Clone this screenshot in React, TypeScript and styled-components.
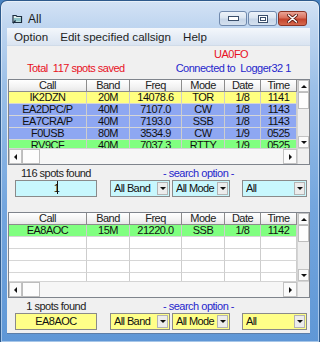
import React from 'react';
import styled, { createGlobalStyle } from 'styled-components';

const GRID_FONT = `"Liberation Sans", Arial, sans-serif`;
const UI_FONT = `"Liberation Sans", Arial, sans-serif`;

const GlobalStyle = createGlobalStyle`
  html, body { margin: 0; padding: 0; background: #4a84c2; }
  body { width: 320px; height: 342px; overflow: hidden; }
  * { box-sizing: border-box; }
`;

const COLS = [78, 43, 52, 43, 36, 36];
const HEAD = ['Call', 'Band', 'Freq', 'Mode', 'Date', 'Time'];

const ROW_COLORS: Record<string, string> = {
  yellow: '#ffff80',
  blue: '#8ea7f2',
  green: '#80ff80',
  white: '#ffffff',
};

type Spot = { cells: string[]; color: string };

const allSpots: Spot[] = [
  { cells: ['IK2DZN', '20M', '14078.6', 'TOR', '1/8', '1141'], color: 'yellow' },
  { cells: ['EA2DPC/P', '40M', '7107.0', 'CW', '1/8', '1143'], color: 'blue' },
  { cells: ['EA7CRA/P', '40M', '7193.0', 'SSB', '1/8', '1143'], color: 'blue' },
  { cells: ['F0USB', '80M', '3534.9', 'CW', '1/9', '0525'], color: 'blue' },
  { cells: ['RV9CF', '40M', '7037.3', 'RTTY', '1/9', '0525'], color: 'green' },
];

const foundSpots: Spot[] = [
  { cells: ['EA8AOC', '15M', '21220.0', 'SSB', '1/8', '1142'], color: 'green' },
  { cells: ['', '', '', '', '', ''], color: 'white' },
  { cells: ['', '', '', '', '', ''], color: 'white' },
  { cells: ['', '', '', '', '', ''], color: 'white' },
  { cells: ['', '', '', '', '', ''], color: 'white' },
];

const Window = styled.div`
  width: 320px;
  height: 342px;
  display: flex;
  flex-direction: column;
  border: 1px solid #2e5a8c;
  border-bottom: none;
  border-radius: 7px 7px 0 0;
  background: linear-gradient(180deg, #d4e3f5 0%, #c0d6f0 7%, #9cc0e8 25%, #74a6de 60%, #5f97d6 100%);
  box-shadow: inset 0 0 0 1px rgba(255, 255, 255, 0.45);
`;

const TitleBar = styled.div`
  height: 27px;
  flex: none;
  display: flex;
  align-items: center;
  padding: 8px 0 0 11px;
`;

const TitleText = styled.span`
  margin-left: 5px;
  font-family: ${UI_FONT};
  font-size: 12px;
  color: #1b1b1b;
`;

const CaptionButtons = styled.div`
  display: flex;
  gap: 1px;
  margin-left: auto;
  margin-right: 12px;
`;

const CaptionButton = styled.div<{ $close?: boolean; $w: number }>`
  width: ${(p) => p.$w}px;
  height: 15px;
  border: 1px solid ${(p) => (p.$close ? '#8b3325' : '#7089ad')};
  border-radius: 3px;
  display: flex;
  align-items: center;
  justify-content: center;
  background: ${(p) =>
    p.$close
      ? 'linear-gradient(180deg, #eaa597 0%, #d9705d 45%, #c4432c 55%, #d66a4f 100%)'
      : 'linear-gradient(180deg, #eef3f9 0%, #dbe5f1 45%, #c6d5e8 55%, #d5e1ef 100%)'};
`;

const Client = styled.div`
  flex: 1;
  margin: 0 9px 8px 6px;
  display: flex;
  flex-direction: column;
  border-bottom: 1px solid #5c7ea8;
`;

const MenuBar = styled.div`
  height: 18px;
  flex: none;
  display: flex;
  align-items: center;
  padding-left: 1px;
  background: linear-gradient(180deg, #f4f7fb 0%, #e6edf6 50%, #dae4f1 100%);
  border-bottom: 1px solid #d0dbe8;
`;

const MenuItem = styled.span`
  padding: 0 6px;
  font-family: ${UI_FONT};
  font-size: 11.6px;
  color: #1e1e1e;
  white-space: nowrap;
`;

const Content = styled.div`
  flex: 1;
  background: #f0f0f0;
  padding-top: 2px;
  font-family: ${GRID_FONT};
  font-size: 11px;
  letter-spacing: -0.5px;
  white-space: nowrap;
`;

const CallLine = styled.div`
  height: 12px;
  line-height: 12px;
  padding-left: 207px;
  color: #e8101e;
`;

const StatusLine = styled.div`
  height: 12px;
  line-height: 12px;
  margin-top: 2px;
  display: flex;
  white-space: pre;
`;

const StatusText = styled.span<{ $color: string; $left: number }>`
  color: ${(p) => p.$color};
  margin-left: ${(p) => p.$left}px;
`;

const GridFrame = styled.div<{ $top: number }>`
  margin: ${(p) => p.$top}px 0 0 1px;
  width: 302px;
  height: 86px;
  border: 1px solid #7f848c;
  background: #fff;
  display: grid;
  grid-template-columns: 288px 12px;
  grid-template-rows: 68px 16px;
`;

const TableArea = styled.div`
  overflow: hidden;
`;

const Row = styled.div`
  display: flex;
  height: 12px;
`;

const HeadCell = styled.div<{ $w: number }>`
  width: ${(p) => p.$w}px;
  flex: none;
  height: 12px;
  line-height: 11px;
  text-align: center;
  color: #222;
  background: linear-gradient(180deg, #ffffff 0%, #f3f3f3 60%, #e8e8e8 100%);
  border-right: 1px solid #8c8c8c;
  border-bottom: 1px solid #8c8c8c;
`;

const Cell = styled.div<{ $w: number; $bg: string }>`
  width: ${(p) => p.$w}px;
  flex: none;
  height: 12px;
  line-height: 11px;
  text-align: center;
  color: #111;
  background: ${(p) => p.$bg};
  border-right: 1px solid #cdcdcd;
  border-bottom: 1px solid #d6d6d6;
`;

const VScroll = styled.div`
  display: flex;
  flex-direction: column;
  background: #eeeeee;
  border-left: 1px solid #d4d4d4;
`;

const HScroll = styled.div`
  display: flex;
  background: #f6f6f6;
  border-top: 1px solid #d4d4d4;
`;

const ScrollBtn = styled.div<{ $w?: number; $h?: number }>`
  width: ${(p) => (p.$w ? `${p.$w}px` : '100%')};
  height: ${(p) => (p.$h ? `${p.$h}px` : '100%')};
  flex: none;
  display: flex;
  align-items: center;
  justify-content: center;
  background: #fbfbfb;
  border: 1px solid #c2c2c2;
`;

const Thumb = styled.div<{ $w?: number; $h?: number }>`
  width: ${(p) => (p.$w ? `${p.$w}px` : '100%')};
  height: ${(p) => (p.$h ? `${p.$h}px` : '100%')};
  flex: none;
  background: #fdfdfd;
  border: 1px solid #bdbdbd;
`;

const Track = styled.div`
  flex: 1;
`;

const Corner = styled.div`
  background: #f0f0f0;
  border-top: 1px solid #d4d4d4;
  border-left: 1px solid #d4d4d4;
`;

const Tri = styled.span<{ $dir: 'up' | 'down' | 'left' | 'right' }>`
  width: 0;
  height: 0;
  border-style: solid;
  border-color: transparent;
  ${(p) =>
    p.$dir === 'up'
      ? 'border-width: 0 3px 3px 3px; border-bottom-color: #111;'
      : p.$dir === 'down'
      ? 'border-width: 3px 3px 0 3px; border-top-color: #111;'
      : p.$dir === 'left'
      ? 'border-width: 3px 3px 3px 0; border-right-color: #111;'
      : 'border-width: 3px 0 3px 3px; border-left-color: #111;'}
`;

const SearchPanel = styled.div`
  display: grid;
  grid-template-columns: 82px auto;
  grid-template-rows: 12px 17px;
  column-gap: 13px;
  row-gap: 1px;
  margin-top: 2px;
  padding-left: 8px;
`;

const FoundLabel = styled.div`
  line-height: 12px;
  text-align: center;
  color: #222;
`;

const OptionLabel = styled.div`
  line-height: 12px;
  padding-left: 53px;
  color: #2626cc;
`;

const SearchInput = styled.div<{ $bg: string }>`
  height: 17px;
  border: 1px solid #8a8a8a;
  background: ${(p) => p.$bg};
  line-height: 15px;
  text-align: center;
  color: #111;
`;

const Caret = styled.span`
  display: inline-block;
  width: 1px;
  height: 13px;
  margin-left: -2px;
  vertical-align: -2px;
  background: #111;
`;

const ComboRow = styled.div`
  display: flex;
`;

const Combo = styled.div<{ $w: number; $gap: number; $bg: string }>`
  width: ${(p) => p.$w}px;
  margin-left: ${(p) => p.$gap}px;
  height: 17px;
  border: 1px solid #8a8a8a;
  background: ${(p) => p.$bg};
  display: flex;
  align-items: center;
  padding: 0 1px 0 3px;
  color: #111;
`;

const ComboText = styled.span`
  flex: 1;
  line-height: 15px;
  overflow: hidden;
  letter-spacing: -0.6px;
`;

const DropBtn = styled.div`
  width: 11px;
  height: 13px;
  flex: none;
  display: flex;
  align-items: center;
  justify-content: center;
  background: #ececec;
  border: 1px solid #b4b4b4;
`;

function WindowIcon() {
  return (
    <svg width="11" height="11" viewBox="0 0 11 11">
      <path d="M1 2.5h3l1 1h4.5v6H1z" fill="#e4f1ee" stroke="#1c2d40" strokeWidth="1.2" />
      <path d="M2 5h7v3.5H2z" fill="#8fc3c8" />
      <path d="M1 10.2l2.6-2.6" stroke="#1c2d40" strokeWidth="1.4" />
    </svg>
  );
}

function DataGrid({ spots, top }: { spots: Spot[]; top: number }) {
  return (
    <GridFrame $top={top}>
      <TableArea>
        <Row>
          {HEAD.map((h, i) => (
            <HeadCell key={h} $w={COLS[i]}>
              {h}
            </HeadCell>
          ))}
        </Row>
        {spots.map((s, r) => (
          <Row key={r}>
            {s.cells.map((c, i) => (
              <Cell key={i} $w={COLS[i]} $bg={ROW_COLORS[s.color]}>
                {c}
              </Cell>
            ))}
          </Row>
        ))}
      </TableArea>
      <VScroll>
        <ScrollBtn $h={12}>
          <Tri $dir="up" />
        </ScrollBtn>
        <Thumb $h={17} />
        <Track />
        <ScrollBtn $h={12}>
          <Tri $dir="down" />
        </ScrollBtn>
      </VScroll>
      <HScroll>
        <ScrollBtn $w={13}>
          <Tri $dir="left" />
        </ScrollBtn>
        <Thumb $w={18} />
        <Track />
        <ScrollBtn $w={14}>
          <Tri $dir="right" />
        </ScrollBtn>
      </HScroll>
      <Corner />
    </GridFrame>
  );
}

function Search({ found, value, bg, caret }: { found: string; value: string; bg: string; caret?: boolean }) {
  return (
    <SearchPanel>
      <FoundLabel>{found}</FoundLabel>
      <OptionLabel>- search option -</OptionLabel>
      <SearchInput $bg={bg}>
        {value}
        {caret && <Caret />}
      </SearchInput>
      <ComboRow>
        <Combo $w={60} $gap={0} $bg={bg}>
          <ComboText>All Band</ComboText>
          <DropBtn>
            <Tri $dir="down" />
          </DropBtn>
        </Combo>
        <Combo $w={58} $gap={2} $bg={bg}>
          <ComboText>All Mode</ComboText>
          <DropBtn>
            <Tri $dir="down" />
          </DropBtn>
        </Combo>
        <Combo $w={65} $gap={12} $bg={bg}>
          <ComboText>All</ComboText>
          <DropBtn>
            <Tri $dir="down" />
          </DropBtn>
        </Combo>
      </ComboRow>
    </SearchPanel>
  );
}

export default function App() {
  return (
    <>
      <GlobalStyle />
      <Window>
        <TitleBar>
          <WindowIcon />
          <TitleText>All</TitleText>
          <CaptionButtons>
            <CaptionButton $w={28}>
              <svg width="11" height="5" viewBox="0 0 11 5">
                <rect x="0.5" y="0.5" width="10" height="4" fill="#fff" stroke="#3b4f6b" />
              </svg>
            </CaptionButton>
            <CaptionButton $w={29}>
              <svg width="10" height="8" viewBox="0 0 10 8">
                <rect x="0.5" y="0.5" width="9" height="7" fill="#fff" stroke="#3b4f6b" />
                <rect x="2.5" y="2.5" width="5" height="3" fill="none" stroke="#3b4f6b" />
              </svg>
            </CaptionButton>
            <CaptionButton $w={29} $close>
              <svg width="11" height="9" viewBox="0 0 11 9">
                <path d="M1.5 1l8 7M9.5 1l-8 7" stroke="#5a1a12" strokeWidth="3.2" strokeLinecap="round" />
                <path d="M1.5 1l8 7M9.5 1l-8 7" stroke="#fff" strokeWidth="1.6" strokeLinecap="round" />
              </svg>
            </CaptionButton>
          </CaptionButtons>
        </TitleBar>
        <Client>
          <MenuBar>
            <MenuItem>Option</MenuItem>
            <MenuItem>Edit specified callsign</MenuItem>
            <MenuItem>Help</MenuItem>
          </MenuBar>
          <Content>
            <CallLine>UA0FO</CallLine>
            <StatusLine>
              <StatusText $color="#e8101e" $left={20}>Total  117 spots saved</StatusText>
              <StatusText $color="#2626cc" $left={51}>Connected to  Logger32 1</StatusText>
            </StatusLine>
            <DataGrid spots={allSpots} top={5} />
            <Search found="116 spots found" value="1" bg="#c8f7fd" caret />
            <DataGrid spots={foundSpots} top={15} />
            <Search found="1 spots found" value="EA8AOC" bg="#ffff88" />
          </Content>
        </Client>
      </Window>
    </>
  );
}
